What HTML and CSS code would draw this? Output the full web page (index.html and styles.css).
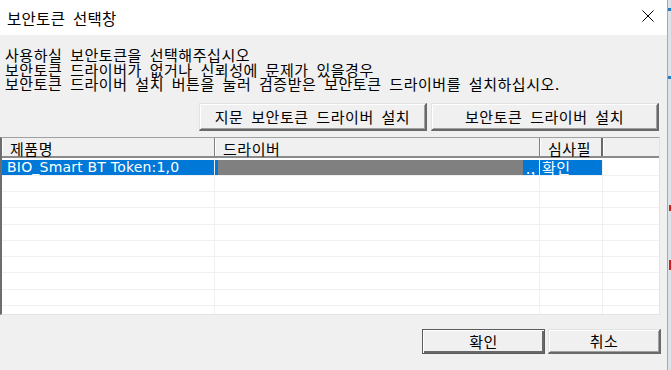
FILE: index.html
```html
<!DOCTYPE html>
<html lang="ko">
  <head>
    <meta charset="UTF-8" />
    <meta name="viewport" content="width=device-width, initial-scale=1.0" />
    <title>보안토큰 선택창</title>
    <link rel="stylesheet" href="styles.css">
  </head>
  <body>
    <div class="screen">
      <div class="dialog">
        <div class="titlebar">
          <span class="title">보안토큰 선택창</span>
          <svg class="close" width="12" height="12" viewBox="0 0 12 12">
            <path d="M0.5 0.5 L11.5 11.5 M11.5 0.5 L0.5 11.5" stroke="#000" stroke-width="1" fill="none" />
          </svg>
        </div>

        <div class="content">
          <p class="msg">
            사용하실 보안토큰을 선택해주십시오<br />
            보안토큰 드라이버가 없거나 신뢰성에 문제가 있을경우<br />
            보안토큰 드라이버 설치 버튼을 눌러 검증받은 보안토큰 드라이버를 설치하십시오.
          </p>

          <div class="installRow">
            <button class="btn installBtn">지문 보안토큰 드라이버 설치</button>
            <button class="btn installBtn">보안토큰 드라이버 설치</button>
          </div>

          <div class="list">
            <div class="listHead">
              <div class="hcell c1">제품명</div>
              <div class="hcell c2">드라이버</div>
              <div class="hcell c3">심사필</div>
              <div class="hcell c4"></div>
            </div>
            <div class="listBody">
              <div class="row selected">
                <div class="cell c1 latin">BIO_Smart BT Token:1,0</div>
                <div class="cell c2"><span class="redact"></span><span class="tail">.,</span></div>
                <div class="cell c3">확인</div>
                <div class="cell c4"></div>
              </div>
              <div class="row"><div class="cell c1"></div><div class="cell c2"></div><div class="cell c3"></div><div class="cell c4"></div></div>
              <div class="row"><div class="cell c1"></div><div class="cell c2"></div><div class="cell c3"></div><div class="cell c4"></div></div>
              <div class="row"><div class="cell c1"></div><div class="cell c2"></div><div class="cell c3"></div><div class="cell c4"></div></div>
              <div class="row"><div class="cell c1"></div><div class="cell c2"></div><div class="cell c3"></div><div class="cell c4"></div></div>
              <div class="row"><div class="cell c1"></div><div class="cell c2"></div><div class="cell c3"></div><div class="cell c4"></div></div>
              <div class="row"><div class="cell c1"></div><div class="cell c2"></div><div class="cell c3"></div><div class="cell c4"></div></div>
              <div class="row"><div class="cell c1"></div><div class="cell c2"></div><div class="cell c3"></div><div class="cell c4"></div></div>
              <div class="row"><div class="cell c1"></div><div class="cell c2"></div><div class="cell c3"></div><div class="cell c4"></div></div>
              <div class="row"><div class="cell c1"></div><div class="cell c2"></div><div class="cell c3"></div><div class="cell c4"></div></div>
            </div>
          </div>

          <div class="actions">
            <button class="btn okBtn">확인</button>
            <button class="btn cancelBtn">취소</button>
          </div>
        </div>
      </div>
      <div class="edge"></div>
    </div>
  </body>
</html>
```

FILE: styles.css
```css
body {
  margin: 0;
  font-family: "Noto Sans CJK KR", "Noto Sans", sans-serif;
  font-size: 15px;
  letter-spacing: 0.55px;
  word-spacing: 3px;
  color: #000;
  background-color: #f0f0f0;
}

.screen {
  display: flex;
  height: 370px;
  overflow: hidden;
}

.dialog {
  width: 667px;
  flex: none;
  background-color: #f0f0f0;
  border-right: 1px solid #e39a5e;
}

.edge {
  flex: 1;
  background:
    linear-gradient(#2b7bc4, #2b7bc4) 0 8px / 100% 3px no-repeat,
    linear-gradient(#2b7bc4, #2b7bc4) 0 76px / 100% 3px no-repeat,
    linear-gradient(#d02020, #d02020) 1px 205px / 2px 6px no-repeat,
    linear-gradient(#d02020, #d02020) 1px 260px / 2px 10px no-repeat,
    #dfe3e8;
}

.titlebar {
  height: 35px;
  background-color: #fff;
  display: flex;
  align-items: center;
  justify-content: space-between;
  padding-left: 7px;
}

.title {
  font-size: 15.5px;
  letter-spacing: 0.3px;
  margin-top: 1px;
}

.close {
  margin-right: 13px;
  margin-top: -4px;
}

.content {
  padding: 13px 6px 0 0;
}

.msg {
  margin: 0 0 0 5px;
  line-height: 14.5px;
}

.installRow {
  display: flex;
  justify-content: flex-end;
  gap: 4px;
  margin: 12px 2px 0 0;
}

.btn {
  font-family: "Noto Sans CJK KR", "Noto Sans", sans-serif;
  font-size: 15px;
  letter-spacing: 0.55px;
  word-spacing: 3px;
  color: #000;
  background-color: #f0f0f0;
  border-top: 1px solid #e3e3e3;
  border-left: 1px solid #e3e3e3;
  border-right: 2px solid #696969;
  border-bottom: 2px solid #696969;
  box-shadow: inset 1px 1px #fff, inset -1px -1px #a0a0a0;
  padding: 0;
  line-height: 1;
}

.installBtn {
  width: 228px;
  height: 28px;
  margin-top: -1px;
}

.list {
  margin-top: 6px;
  width: 657px;
  height: 176px;
  background-color: #fff;
  border-top: 1px solid #a0a0a0;
  border-left: 2px solid #6d6d6d;
  border-right: 1px solid #e3e3e3;
  border-bottom: 1px solid #e3e3e3;
  overflow: hidden;
}

.listHead {
  display: flex;
  height: 18px;
  background-color: #f0f0f0;
  border-bottom: 2px solid #8a8a8a;
}

.hcell {
  box-sizing: border-box;
  height: 18px;
  line-height: 21px;
  padding-left: 7px;
  border-left: 1px solid #fff;
  border-right: 1px solid #808080;
}

.listBody {
  padding-top: 2px;
}

.row {
  display: flex;
  height: 16.25px;
}

.cell {
  box-sizing: border-box;
  height: 100%;
  line-height: 15px;
  padding-left: 4px;
  border-right: 1px solid #f0f0f0;
  border-bottom: 1px solid #f0f0f0;
  white-space: nowrap;
}

.latin {
  font-family: "DejaVu Sans", sans-serif;
  font-size: 14px;
  letter-spacing: 0.2px;
  word-spacing: 0;
  padding-left: 5px;
}

.c1 {
  width: 213px;
}

.c2 {
  width: 325px;
}

.c3 {
  width: 63px;
}

.c4 {
  flex: 1;
  border-right: none;
}

.hcell.c3 {
  border-right: 2px solid #696969;
}

.selected .c1,
.selected .c2,
.selected .c3 {
  background-color: #0078d7;
  color: #fff;
}

.selected .c3 {
  padding-left: 2px;
}

.redact {
  display: inline-block;
  vertical-align: top;
  width: 305px;
  height: 15px;
  margin-left: -1px;
  background-color: #808080;
}

.tail {
  margin-left: 3px;
  vertical-align: top;
}

.actions {
  display: flex;
  justify-content: flex-end;
  gap: 3px;
  margin-top: 14px;
}

.okBtn {
  width: 123px;
  height: 25px;
  border: 1px solid #5a5a5a;
  box-shadow: inset 1px 1px #fff, inset -2px -2px #696969;
}

.cancelBtn {
  width: 113px;
  height: 25px;
}
```
